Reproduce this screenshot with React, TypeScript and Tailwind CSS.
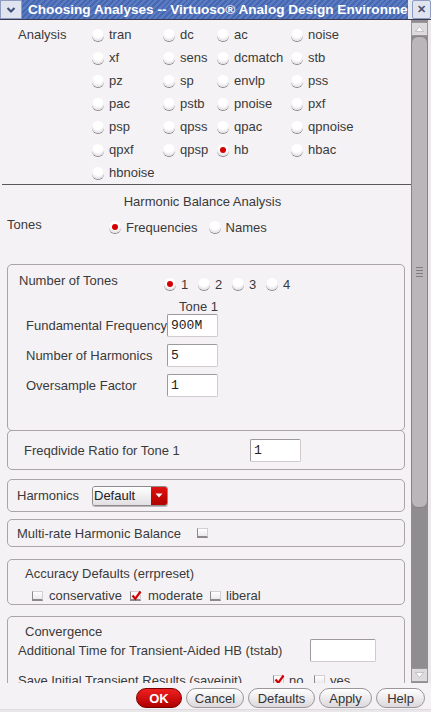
import React from 'react';

const rows: [string, string, string, string][] = [
  ['tran', 'dc', 'ac', 'noise'],
  ['xf', 'sens', 'dcmatch', 'stb'],
  ['pz', 'sp', 'envlp', 'pss'],
  ['pac', 'pstb', 'pnoise', 'pxf'],
  ['psp', 'qpss', 'qpac', 'qpnoise'],
  ['qpxf', 'qpsp', 'hb', 'hbac'],
  ['hbnoise', '', '', ''],
];

function Radio({ on }: { on?: boolean }) {
  return (
    <span className="inline-flex h-[12px] w-[12px] shrink-0 items-center justify-center rounded-full bg-[radial-gradient(circle_at_50%_30%,#ffffff_45%,#d2ced2_100%)] shadow-[0_1px_0_#8c888c]">
      {on && <span className="h-[6px] w-[6px] rounded-full bg-[#d60000]" />}
    </span>
  );
}

function Check({ on }: { on?: boolean }) {
  return (
    <span className="relative inline-block h-[10px] w-[11px] shrink-0 border border-b-2 border-[#d2ced2] border-b-[#8c888c] border-l-[#8c888c] bg-[linear-gradient(#ffffff,#ece9ec)]">
      {on && (
        <svg className="absolute -top-[2px] left-[0px]" width="11" height="11" viewBox="0 0 11 11">
          <path d="M1.5 5.5 L4.3 8.8 L9.5 1.5" stroke="#d40000" strokeWidth="2.2" fill="none" />
        </svg>
      )}
    </span>
  );
}

function Field({ value, w = 'w-[51px]' }: { value?: string; w?: string }) {
  return (
    <div className={`h-[23px] ${w} shrink-0 rounded-[2px] border border-[#cfcbcf] border-l-[#9d999d] border-t-[#9d999d] bg-white px-[3px] font-['Liberation_Mono',monospace] text-[13px] leading-[21px] text-[#222]`}>
      {value}
    </div>
  );
}

function Button({ label, w, primary }: { label: string; w: string; primary?: boolean }) {
  return (
    <div
      className={`flex h-[20px] ${w} items-center justify-center rounded-full border ${
        primary
          ? 'border-[#7a0000] bg-[linear-gradient(#f02020,#b00000)] font-bold text-white'
          : 'border-[#9a969a] bg-[linear-gradient(#ffffff,#dcd8dc)] text-[#333]'
      }`}
    >
      {label}
    </div>
  );
}

export default function App() {
  return (
    <div className="flex h-[712px] w-[431px] flex-col overflow-hidden bg-[#f5f2f5] font-['Liberation_Sans',Arial,sans-serif] text-[13px] leading-[15px] text-[#3a3a3a]">
      {/* title bar */}
      <div className="flex h-[20px] shrink-0 border-b border-[#3a3a50] bg-[#e7e9f0]">
        <div className="flex w-[22px] shrink-0 items-center justify-center border border-[#8d9cc0] bg-[#dfe4ef]">
          <svg width="10" height="8" viewBox="0 0 10 8">
            <path d="M1.5 2 L5 5.5 L8.5 2" stroke="#3f4f78" strokeWidth="2" fill="none" />
          </svg>
        </div>
        <div className="min-w-0 flex-1 overflow-hidden whitespace-nowrap bg-[repeating-linear-gradient(135deg,#4767b1_0px,#4767b1_2px,#5b7bc3_2px,#5b7bc3_4px)] pl-[6px] text-[13.6px] font-bold leading-[19px] text-white">
          Choosing Analyses -- Virtuoso® Analog Design Environment
        </div>
        <div className="w-[4px] shrink-0" />
        <div className="flex w-[19px] shrink-0 items-center justify-center rounded-[2px] border border-[#8d9cc0] bg-[#dfe4ef] text-[11px] font-bold text-[#4a5470]">
          ✕
        </div>
      </div>

      {/* main area */}
      <div className="flex h-[663px] shrink-0">
        <div className="w-[411px] overflow-hidden">
          {/* analysis grid */}
          <div className="flex pt-[3px]">
            <div className="w-[92px] pl-[18px] leading-[23px]">Analysis</div>
            <div className="grid grid-cols-[71px_54px_74px_60px] auto-rows-[23px]">
              {rows.flatMap((r, i) =>
                r.map((name, j) =>
                  name ? (
                    <div key={`${i}-${j}`} className="flex items-center gap-[5px]">
                      <Radio on={name === 'hb'} />
                      <span>{name}</span>
                    </div>
                  ) : (
                    <div key={`${i}-${j}`} />
                  )
                )
              )}
            </div>
          </div>

          <div className="ml-[2px] border-t border-[#5a575a]" />

          <div className="flex h-[32px] items-center justify-center pr-[6px]">Harmonic Balance Analysis</div>

          <div className="flex h-[20px]">
            <div className="w-[109px] self-start pl-[7px]">Tones</div>
            <div className="flex items-center gap-[5px]">
              <Radio on />
              <span>Frequencies</span>
              <span className="w-[1px]" />
              <Radio />
              <span>Names</span>
            </div>
          </div>

          {/* tones box */}
          <div className="ml-[7px] mt-[27px] h-[167px] w-[398px] rounded-[5px] border border-[#a8a4a8]">
            <div className="mt-[8px] flex h-[22px]">
              <div className="w-[156px] self-start pl-[11px]">Number of Tones</div>
              <div className="flex items-center">
                {['1', '2', '3', '4'].map((n, i) => (
                  <div key={n} className={`flex items-center gap-[5px] ${i < 3 ? 'w-[34px]' : ''}`}>
                    <Radio on={n === '1'} />
                    <span>{n}</span>
                  </div>
                ))}
              </div>
            </div>
            <div className="flex h-[19px] items-end pl-[171px]">Tone 1</div>
            <div className="flex flex-col gap-[7px]">
              {[
                ['Fundamental Frequency', '900M'],
                ['Number of Harmonics', '5'],
                ['Oversample Factor', '1'],
              ].map(([l, v]) => (
                <div key={l} className="flex h-[23px] items-center">
                  <div className="w-[159px] whitespace-nowrap pl-[18px]">{l}</div>
                  <Field value={v} />
                </div>
              ))}
            </div>
          </div>

          <div className="-mt-px ml-[7px] flex h-[40px] w-[398px] items-center rounded-[5px] border border-[#a8a4a8]">
            <div className="w-[242px] pl-[16px]">Freqdivide Ratio for Tone 1</div>
            <Field value="1" />
          </div>

          {/* harmonics */}
          <div className="ml-[7px] mt-[9px] flex h-[33px] w-[398px] items-center rounded-[5px] border border-[#a8a4a8]">
            <div className="w-[84px] pl-[9px]">Harmonics</div>
            <div className="flex h-[20px] w-[76px] overflow-hidden rounded-[3px] border border-[#8e8a8e] shadow-[0_1px_0_#b8b4b8]">
              <div className="flex-1 bg-[linear-gradient(#ffffff,#e2dfe2)] pl-[1px] leading-[18px] text-[#222]">Default</div>
              <div className="flex w-[16px] items-center justify-center bg-[linear-gradient(#e01010,#b00000)]">
                <svg width="8" height="5" viewBox="0 0 8 5">
                  <path d="M0.5 0.5 H7.5 L4 4.5 Z" fill="#fff" />
                </svg>
              </div>
            </div>
          </div>

          {/* multi-rate */}
          <div className="ml-[7px] mt-[7px] flex h-[28px] w-[398px] items-center rounded-[5px] border border-[#a8a4a8]">
            <div className="w-[189px] pl-[9px]">Multi-rate Harmonic Balance</div>
            <Check />
          </div>

          {/* accuracy */}
          <div className="ml-[7px] mt-[12px] h-[46px] w-[398px] rounded-[5px] border border-[#a8a4a8]">
            <div className="mt-[6px] pl-[17px]">Accuracy Defaults (errpreset)</div>
            <div className="mt-[7px] flex h-[15px] items-center pl-[24px]">
              <div className="flex w-[98px] items-center gap-[6px]">
                <Check />
                <span>conservative</span>
              </div>
              <div className="flex w-[80px] items-center gap-[7px]">
                <Check on />
                <span>moderate</span>
              </div>
              <div className="flex items-center gap-[5px]">
                <Check />
                <span>liberal</span>
              </div>
            </div>
          </div>

          {/* convergence */}
          <div className="ml-[7px] mt-[11px] h-[120px] w-[398px] rounded-[5px] border border-[#a8a4a8]">
            <div className="mt-[7px] pl-[17px]">Convergence</div>
            <div className="flex h-[23px] items-center">
              <div className="w-[302px] pl-[10px]">Additional Time for Transient-Aided HB (tstab)</div>
              <Field w="w-[66px]" />
            </div>
            <div className="mt-[10px] flex h-[16px] items-center">
              <div className="w-[265px] pl-[10px]">Save Initial Transient Results (saveinit)</div>
              <div className="flex w-[41px] items-center gap-[5px]">
                <Check on />
                <span>no</span>
              </div>
              <div className="flex items-center gap-[5px]">
                <Check />
                <span>yes</span>
              </div>
            </div>
          </div>
        </div>

        {/* scrollbar */}
        <div className="flex w-[17px] flex-col bg-[#908d90] pt-[2px]">
          <div className="flex h-[14px] items-center justify-center border border-[#9a979a] bg-[#dedbde]">
            <svg width="9" height="6" viewBox="0 0 9 6">
              <path d="M0.5 5.5 H8.5 L4.5 0.5 Z" fill="#fff" stroke="#a8a4a8" strokeWidth="0.6" />
            </svg>
          </div>
          <div className="flex h-[472px] items-center justify-center rounded-t-[7px] rounded-b-[7px] border border-[#858285] bg-[#bab6ba]">
            <div className="flex flex-col gap-[2px]">
              <div className="h-px w-[7px] bg-[#807d80]" />
              <div className="h-px w-[7px] bg-[#807d80]" />
              <div className="h-px w-[7px] bg-[#807d80]" />
              <div className="h-px w-[7px] bg-[#807d80]" />
            </div>
          </div>
          <div className="flex-1" />
          <div className="flex h-[14px] items-center justify-center border border-[#9a979a] bg-[#dedbde]">
            <svg width="9" height="6" viewBox="0 0 9 6">
              <path d="M0.5 0.5 H8.5 L4.5 5.5 Z" fill="#fff" stroke="#a8a4a8" strokeWidth="0.6" />
            </svg>
          </div>
          <div className="h-px" />
        </div>
        <div className="w-[3px] bg-[#ebe9eb]" />
      </div>

      {/* button bar */}
      <div className="flex h-[26px] shrink-0 items-start justify-end gap-[4px] pr-[6px] pt-[5px]">
        <Button label="OK" w="w-[46px]" primary />
        <Button label="Cancel" w="w-[58px]" />
        <Button label="Defaults" w="w-[67px]" />
        <Button label="Apply" w="w-[53px]" />
        <Button label="Help" w="w-[49px]" />
      </div>
      <div className="flex-1 border-t border-[#dedbde] bg-[#e9e7e9]" />
    </div>
  );
}
